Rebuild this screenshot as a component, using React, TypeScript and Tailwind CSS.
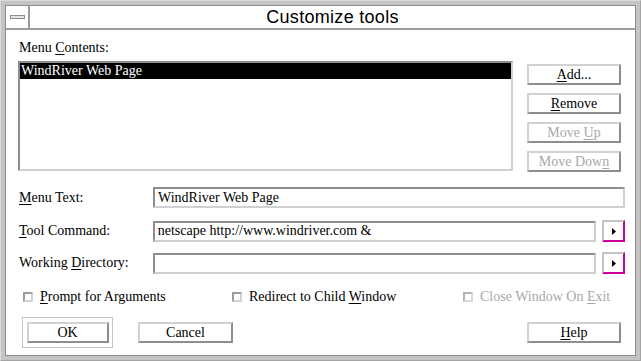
const btn =
  "flex h-[21px] items-center justify-center border-2 border-t-[#d2d2d2] border-l-[#d2d2d2] border-b-[#8e8e8e] border-r-[#8e8e8e] bg-white font-['Liberation_Serif','Times_New_Roman',serif] text-[14px] leading-[16px]"

const field =
  "flex h-[21px] items-center border-2 border-t-[#8e8e8e] border-l-[#8e8e8e] border-b-[#d0d0d0] border-r-[#d0d0d0] bg-white pl-[3px] font-['Liberation_Serif','Times_New_Roman',serif] text-[14px] leading-[16px] text-black"

function U({ children }: { children: string }) {
  return <span className="underline underline-offset-[2px]">{children}</span>
}

function Arrow() {
  return (
    <div className="ml-[6px] flex h-[22px] w-[23px] items-center justify-center border-2 border-t-[#c4c4c4] border-l-[#c4c4c4] border-b-[#cc0099] border-r-[#cc0099] bg-white">
      <svg width="4" height="7" viewBox="0 0 4 7" aria-hidden>
        <path d="M0 0L4 3.5L0 7Z" fill="#000" />
      </svg>
    </div>
  )
}

function Check({ disabled, children }: { disabled?: boolean; children: React.ReactNode }) {
  return (
    <div className={`flex items-center ${disabled ? 'text-[#a8a8a8]' : 'text-black'}`}>
      <span
        className={`mr-[7px] inline-block h-[10px] w-[10px] border-2 ${
          disabled
            ? 'border-t-[#b4b4b4] border-l-[#b4b4b4] border-b-[#dadada] border-r-[#dadada]'
            : 'border-t-[#9a9a9a] border-l-[#9a9a9a] border-b-[#d2d2d2] border-r-[#d2d2d2]'
        } bg-white`}
      />
      <span>{children}</span>
    </div>
  )
}

export default function App() {
  return (
    <div className="h-[361px] w-[641px] border border-t-[#dcdcdc] border-l-[#dcdcdc] border-b-[#a4a4a4] border-r-[#a4a4a4] bg-[#c4c4c4] p-[4px] font-['Liberation_Serif','Times_New_Roman',serif]">
      <div className="flex h-full flex-col border border-[#8c8c8c] bg-white">
        {/* title bar */}
        <div className="flex h-[24px] border-b-2 border-[#9c9c9c]">
          <div className="flex w-[24px] items-center border-r-2 border-[#9c9c9c] pl-[4px]">
            <div className="h-[4px] w-[15px] border border-[#8e8e8e] bg-[#e6e6e6]" />
          </div>
          <div className="flex flex-1 items-center justify-center font-['Liberation_Sans',Arial,sans-serif] text-[18px] tracking-[0.3px] text-black">
            Customize tools
          </div>
        </div>

        <div className="flex flex-col pl-[12px] pr-[10px] font-['Liberation_Serif','Times_New_Roman',serif] text-[14px] leading-[16px] text-black">
          <div className="mt-[10px] pl-[1px]">
            Menu <U>C</U>ontents:
          </div>

          <div className="mt-[5px] flex">
            <div className="h-[110px] w-[495px] border-2 border-t-[#8e8e8e] border-l-[#8e8e8e] border-b-[#d0d0d0] border-r-[#d0d0d0] bg-white">
              <div className="h-[16px] bg-black pl-[1px] text-white">WindRiver Web Page</div>
            </div>
            <div className="ml-[14px] mt-[3px] flex w-[94px] flex-col gap-[8px]">
              <div className={`${btn} font-['Liberation_Sans',Arial,sans-serif] text-[13px]`}>
                <U>A</U>dd...
              </div>
              <div className={btn}>
                <U>R</U>emove
              </div>
              <div className={`${btn} text-[#a8a8a8]`}>
                Move&nbsp;<U>U</U>p
              </div>
              <div className={`${btn} text-[#a8a8a8]`}>
                Move Dow<U>n</U>
              </div>
            </div>
          </div>

          <div className="mt-[15px] flex items-center">
            <div className="w-[135px] pl-[1px]">
              <U>M</U>enu Text:
            </div>
            <div className={`${field} w-[472px]`}>WindRiver Web Page</div>
          </div>

          <div className="mt-[12px] flex items-center">
            <div className="w-[135px] pl-[1px]">
              <U>T</U>ool Command:
            </div>
            <div className={`${field} w-[444px] pl-[2px]`}>netscape http://www.windriver.com &amp;</div>
            <Arrow />
          </div>

          <div className="mt-[10px] flex items-center">
            <div className="w-[135px] pl-[1px]">
              Working <U>D</U>irectory:
            </div>
            <div className={`${field} w-[444px]`} />
            <Arrow />
          </div>

          <div className="mt-[15px] flex h-[16px] items-center pl-[5px]">
            <div className="w-[209px]">
              <Check>
                <U>P</U>rompt for Arguments
              </Check>
            </div>
            <div className="w-[231px]">
              <Check>
                Redirect to Child <U>W</U>indow
              </Check>
            </div>
            <Check disabled>
              Close Window On <U>E</U>xit
            </Check>
          </div>

          <div className="mt-[12px] flex items-center justify-between pl-[4px] pr-[4px]">
            <div className="flex items-center">
              <div className="flex h-[31px] w-[91px] items-center justify-center border border-[#c4c4c4] bg-white">
                <div className={`${btn} w-[82px]`}>OK</div>
              </div>
              <div className={`${btn} ml-[25px] w-[95px]`}>Cancel</div>
            </div>
            <div className={`${btn} w-[94px]`}>
              <U>H</U>elp
            </div>
          </div>
        </div>
      </div>
    </div>
  )
}
